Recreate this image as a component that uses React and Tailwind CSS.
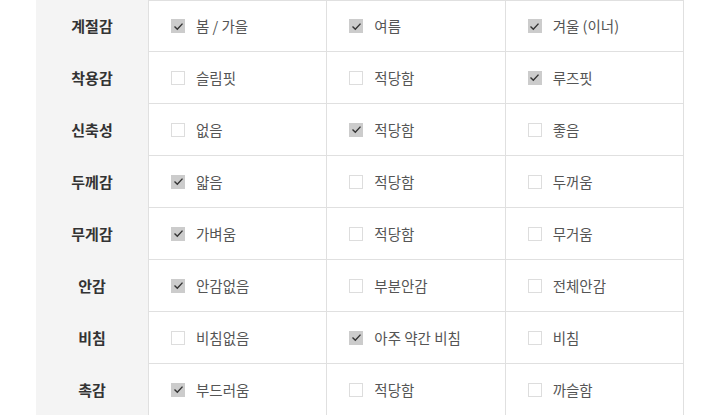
import React from 'react';

const rows = [
  { label: '계절감', options: [['봄 / 가을', true], ['여름', true], ['겨울 (이너)', true]] },
  { label: '착용감', options: [['슬림핏', false], ['적당함', false], ['루즈핏', true]] },
  { label: '신축성', options: [['없음', false], ['적당함', true], ['좋음', false]] },
  { label: '두께감', options: [['얇음', true], ['적당함', false], ['두꺼움', false]] },
  { label: '무게감', options: [['가벼움', true], ['적당함', false], ['무거움', false]] },
  { label: '안감', options: [['안감없음', true], ['부분안감', false], ['전체안감', false]] },
  { label: '비침', options: [['비침없음', false], ['아주 약간 비침', true], ['비침', false]] },
  { label: '촉감', options: [['부드러움', true], ['적당함', false], ['까슬함', false]] },
];

const CheckBox = ({ checked }) =>
  checked ? (
    <span className="flex h-[14px] w-[14px] shrink-0 items-center justify-center bg-[#cccccc]">
      <svg width="11" height="11" viewBox="0 0 11 11" fill="none">
        <path d="M1.5 5.6 L4.3 8.3 L9.5 2.6" stroke="#333" strokeWidth="1.4" />
      </svg>
    </span>
  ) : (
    <span className="h-[14px] w-[14px] shrink-0 border border-[#dddddd] bg-white" />
  );

const App = () => {
  return (
    <div
      className="h-[415px] w-[720px] overflow-hidden bg-white"
      style={{ fontFamily: '"Noto Sans CJK KR", "Noto Sans", sans-serif' }}
    >
      <div className="ml-[36px] w-[648px]">
        {rows.map((row, i) => (
          <div key={row.label} className="flex h-[52px]">
            <div className="flex w-[112px] shrink-0 items-center justify-center bg-[#f4f4f4] text-[15px] font-bold text-[#333]">
              {row.label}
            </div>
            <div
              className={
                'grid flex-1 grid-cols-3 border-b border-l border-[#e0e0e0] ' +
                (i === 0 ? 'border-t' : '')
              }
            >
              {row.options.map(([text, checked], j) => (
                <div
                  key={text + j}
                  className="flex items-center gap-[11px] border-r border-[#e0e0e0] pl-[22px] text-[14.5px] text-[#555]"
                >
                  <CheckBox checked={checked} />
                  <span>{text}</span>
                </div>
              ))}
            </div>
          </div>
        ))}
      </div>
    </div>
  );
};

export default App;
